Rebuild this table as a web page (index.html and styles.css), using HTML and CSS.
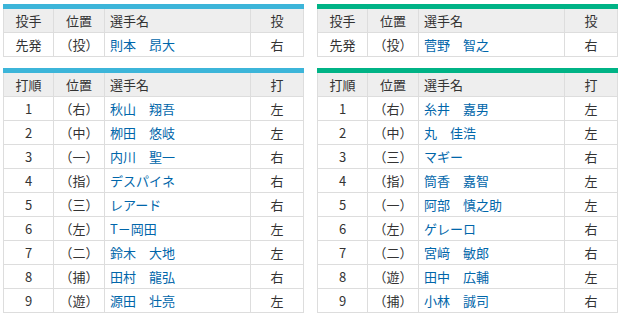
FILE: index.html
```html
<!DOCTYPE html>
<html lang="ja">
<head>
<meta charset="utf-8">
<link rel="stylesheet" href="styles.css">
</head>
<body>
<div class="wrap">
  <div class="side">
    <table class="tbl home">
      <colgroup><col class="c1"><col class="c2"><col class="c3"><col class="c4"></colgroup>
      <tr class="head"><th>投手</th><th>位置</th><th class="nm">選手名</th><th>投</th></tr>
      <tr><td>先発</td><td>（投）</td><td class="nm"><a>則本　昂大</a></td><td>右</td></tr>
    </table>
    <table class="tbl home">
      <colgroup><col class="c1"><col class="c2"><col class="c3"><col class="c4"></colgroup>
      <tr class="head"><th>打順</th><th>位置</th><th class="nm">選手名</th><th>打</th></tr>
      <tr><td>1</td><td>（右）</td><td class="nm"><a>秋山　翔吾</a></td><td>左</td></tr>
      <tr><td>2</td><td>（中）</td><td class="nm"><a>栁田　悠岐</a></td><td>左</td></tr>
      <tr><td>3</td><td>（一）</td><td class="nm"><a>内川　聖一</a></td><td>右</td></tr>
      <tr><td>4</td><td>（指）</td><td class="nm"><a>デスパイネ</a></td><td>右</td></tr>
      <tr><td>5</td><td>（三）</td><td class="nm"><a>レアード</a></td><td>右</td></tr>
      <tr><td>6</td><td>（左）</td><td class="nm"><a>T－岡田</a></td><td>左</td></tr>
      <tr><td>7</td><td>（二）</td><td class="nm"><a>鈴木　大地</a></td><td>左</td></tr>
      <tr><td>8</td><td>（捕）</td><td class="nm"><a>田村　龍弘</a></td><td>右</td></tr>
      <tr><td>9</td><td>（遊）</td><td class="nm"><a>源田　壮亮</a></td><td>左</td></tr>
    </table>
  </div>
  <div class="side">
    <table class="tbl away">
      <colgroup><col class="c1"><col class="c2"><col class="c3"><col class="c4"></colgroup>
      <tr class="head"><th>投手</th><th>位置</th><th class="nm">選手名</th><th>投</th></tr>
      <tr><td>先発</td><td>（投）</td><td class="nm"><a>菅野　智之</a></td><td>右</td></tr>
    </table>
    <table class="tbl away">
      <colgroup><col class="c1"><col class="c2"><col class="c3"><col class="c4"></colgroup>
      <tr class="head"><th>打順</th><th>位置</th><th class="nm">選手名</th><th>打</th></tr>
      <tr><td>1</td><td>（右）</td><td class="nm"><a>糸井　嘉男</a></td><td>左</td></tr>
      <tr><td>2</td><td>（中）</td><td class="nm"><a>丸　佳浩</a></td><td>左</td></tr>
      <tr><td>3</td><td>（三）</td><td class="nm"><a>マギー</a></td><td>右</td></tr>
      <tr><td>4</td><td>（指）</td><td class="nm"><a>筒香　嘉智</a></td><td>左</td></tr>
      <tr><td>5</td><td>（一）</td><td class="nm"><a>阿部　慎之助</a></td><td>左</td></tr>
      <tr><td>6</td><td>（左）</td><td class="nm"><a>ゲレーロ</a></td><td>右</td></tr>
      <tr><td>7</td><td>（二）</td><td class="nm"><a>宮﨑　敏郎</a></td><td>右</td></tr>
      <tr><td>8</td><td>（遊）</td><td class="nm"><a>田中　広輔</a></td><td>左</td></tr>
      <tr><td>9</td><td>（捕）</td><td class="nm"><a>小林　誠司</a></td><td>右</td></tr>
    </table>
  </div>
</div>
</body>
</html>
```
FILE: styles.css
```css
html, body {
  margin: 0;
  padding: 0;
  background: #fff;
}
body {
  font-family: "Noto Sans CJK JP", "Noto Sans", sans-serif;
  font-size: 13px;
  color: #333;
}
.wrap {
  display: flex;
  gap: 14px;
  padding: 4px 3px 0 3px;
}
.side {
  width: 300px;
  display: flex;
  flex-direction: column;
  gap: 11px;
}
.tbl {
  width: 300px;
  border-collapse: collapse;
  table-layout: fixed;
  border: 1px solid #ddd;
}
.tbl.home { border-top: 5px solid #3cb5d9; }
.tbl.away { border-top: 5px solid #00b386; }
.c1 { width: 50px; }
.c2 { width: 51px; }
.c3 { width: 146px; }
.c4 { width: 53px; }
.tbl th, .tbl td {
  border: 1px solid #ddd;
  height: 23px;
  padding: 0;
  text-align: center;
  font-weight: normal;
  line-height: 23px;
  white-space: nowrap;
  overflow: hidden;
}
.tbl .head th {
  background: #eeeeee;
}
.tbl th.nm, .tbl td.nm {
  text-align: left;
  padding-left: 5px;
}
.tbl a {
  color: #0066aa;
  text-decoration: none;
}
```
